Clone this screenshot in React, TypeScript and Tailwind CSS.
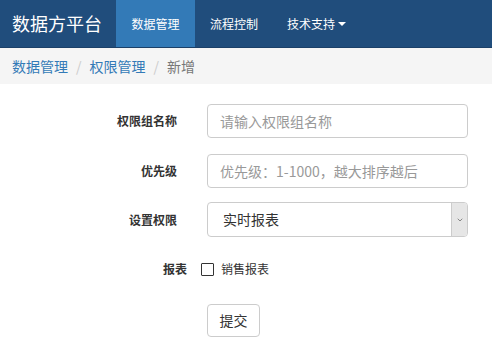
import { ChevronDown } from "lucide-react";

const font = { fontFamily: '"Noto Sans CJK SC", "Noto Sans", sans-serif' };

export default function App() {
  return (
    <div className="w-[492px] h-[364px] bg-white text-[#333]" style={font}>
      {/* Navbar */}
      <nav className="h-[48px] bg-[#204d7c] flex items-stretch border-b border-[#1b4068]">
        <div className="pl-[12px] pr-[14px] flex items-center text-white text-[18px]">
          数据方平台
        </div>
        <a className="w-[79px] flex items-center justify-center bg-[#337ab7] text-white text-[12px]">
          数据管理
        </a>
        <a className="px-[15px] flex items-center text-white text-[12px]">流程控制</a>
        <a className="px-[14px] flex items-center text-white text-[12px]">
          技术支持
          <span className="ml-[3px] w-0 h-0 border-l-[4px] border-r-[4px] border-t-[4px] border-l-transparent border-r-transparent border-t-white" />
        </a>
      </nav>

      {/* Breadcrumb */}
      <div className="h-[36px] bg-[#f5f5f5] flex items-center px-[12px] text-[14px]">
        <span className="text-[#337ab7]">数据管理</span>
        <span className="text-[#ccc] px-[8px]">/</span>
        <span className="text-[#337ab7]">权限管理</span>
        <span className="text-[#ccc] px-[8px]">/</span>
        <span className="text-[#777]">新增</span>
      </div>

      {/* Form */}
      <div className="pt-[20px] flex flex-col">
        <div className="flex items-center h-[34px]">
          <label className="w-[177px] text-right text-[12px] font-bold">权限组名称</label>
          <input
            style={font}
            className="ml-[30px] w-[261px] h-[34px] border border-[#ccc] rounded-[4px] px-[12px] text-[14px] placeholder:text-[#999] outline-none"
            placeholder="请输入权限组名称"
          />
        </div>
        <div className="flex items-center h-[34px] mt-[16px]">
          <label className="w-[177px] text-right text-[12px] font-bold">优先级</label>
          <input
            style={font}
            className="ml-[30px] w-[261px] h-[34px] border border-[#ccc] rounded-[4px] px-[12px] text-[14px] placeholder:text-[#999] outline-none"
            placeholder="优先级：1-1000，越大排序越后"
          />
        </div>
        <div className="flex items-center h-[35px] mt-[14px]">
          <label className="w-[177px] text-right text-[12px] font-bold">设置权限</label>
          <div className="ml-[30px] w-[261px] h-[35px] border border-[#ccc] rounded-[4px] flex items-stretch overflow-hidden">
            <span className="flex-1 flex items-center pl-[15px] text-[14px] text-[#333]">实时报表</span>
            <span className="w-[16px] bg-[#e6e6e6] border-l border-[#ccc] flex items-center justify-center">
              <ChevronDown className="w-[8px] h-[8px] text-[#555]" strokeWidth={2} />
            </span>
          </div>
        </div>
        <div className="flex items-center mt-[22px] h-[20px]">
          <label className="w-[187px] text-right text-[12px] font-bold">报表</label>
          <span className="ml-[14px] w-[13px] h-[13px] border-[1.5px] border-[#333] rounded-[1px]" />
          <span className="ml-[7px] text-[12px]">销售报表</span>
        </div>
        <div className="mt-[25px] pl-[207px]">
          <button
            style={font}
            className="w-[53px] h-[33px] border border-[#ccc] rounded-[4px] bg-white text-[14px] text-[#333]"
          >
            提交
          </button>
        </div>
      </div>
    </div>
  );
}
